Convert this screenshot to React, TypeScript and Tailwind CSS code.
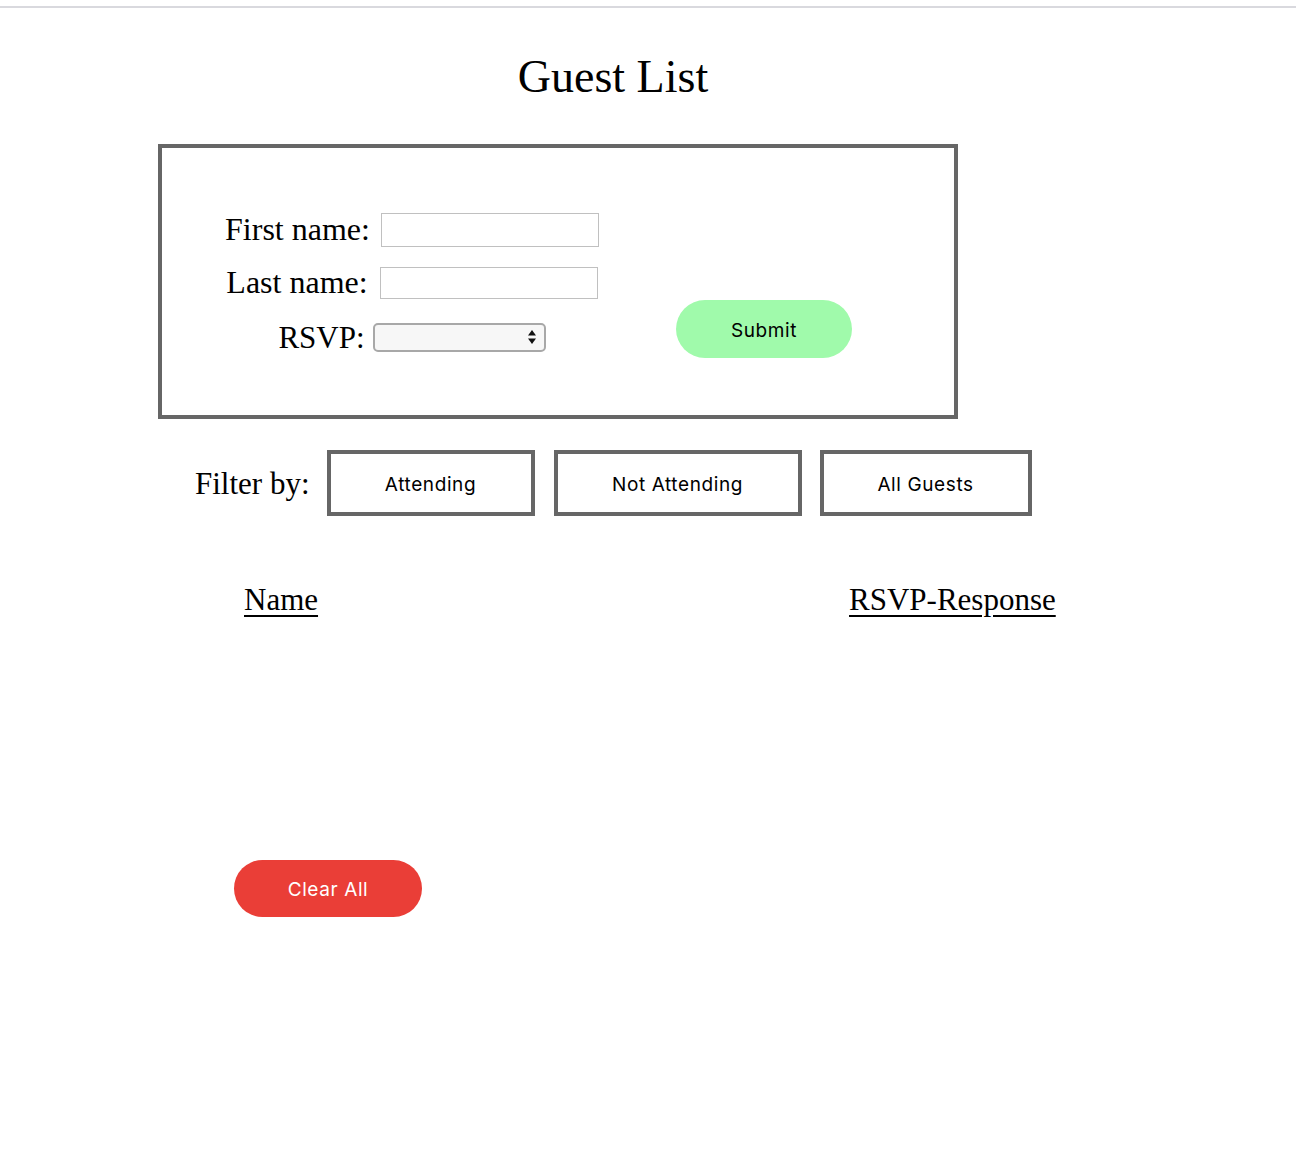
import React from "react";

const serif = "font-['Liberation_Serif',_'Times_New_Roman',_serif]";
const sans = "font-['Inter',_'Roboto',_sans-serif]";

function SelectArrows() {
  return (
    <svg width="10" height="16" viewBox="0 0 10 16" className="absolute right-[9px] top-[6px]">
      <path d="M5 1 L9 6.5 L1 6.5 Z" fill="#111" />
      <path d="M5 15 L9 9.5 L1 9.5 Z" fill="#111" />
    </svg>
  );
}

export default function App() {
  return (
    <div className="w-[1296px] min-h-[1174px] bg-white text-black">
      <div className="h-[6px] bg-white" />
      <div className="h-[2px] bg-[#d9d9de]" />

      <h1 className={`${serif} mt-[42px] w-[1226px] text-center text-[46px] leading-[54px] font-normal`}>
        Guest List
      </h1>

      <div className="mt-[40px] ml-[158px] w-[800px] h-[275px] border-4 border-[#666666] flex items-start">
        <div className={`${serif} w-[500px] pt-[65px] flex flex-col items-center`}>
          <div className="flex items-center h-[34px]">
            <span className="text-[32px] leading-[34px] -mt-[3px]">First name:</span>
            <input className="ml-[11px] w-[218px] h-[34px] border border-[#c0c0c0] bg-white outline-none" />
          </div>
          <div className="mt-[20px] flex items-center h-[32px]">
            <span className="text-[32px] leading-[32px] -mt-[2px]">Last name:</span>
            <input className="ml-[12px] w-[218px] h-[32px] border border-[#c0c0c0] bg-white outline-none" />
          </div>
          <div className="mt-[24px] flex items-center h-[29px]">
            <span className="text-[31px] leading-[29px] -mt-[1px]">RSVP:</span>
            <div className="relative ml-[8px] w-[173px] h-[29px]">
              <select className="appearance-none w-full h-full rounded-[5px] border-2 border-[#a8a8a8] bg-[#f7f7f7] outline-none">
                <option></option>
                <option>Attending</option>
                <option>Not Attending</option>
              </select>
              <SelectArrows />
            </div>
          </div>
        </div>
        <button
          className={`${sans} mt-[152px] ml-[14px] w-[176px] h-[58px] pt-[5px] rounded-full bg-[#a0faab] text-[19px] text-black tracking-[0.6px]`}
        >
          Submit
        </button>
      </div>

      <div className="mt-[31px] ml-[195px] flex items-center h-[66px]">
        <span className={`${serif} text-[31px] leading-[36px] mt-[2px]`}>Filter by:</span>
        <button className={`${sans} ml-[17px] w-[208px] h-[66px] pt-[5px] border-4 border-[#666666] bg-white text-[19px] tracking-[0.6px]`}>
          Attending
        </button>
        <button className={`${sans} ml-[19px] w-[248px] h-[66px] pt-[5px] border-4 border-[#666666] bg-white text-[19px] tracking-[0.6px]`}>
          Not Attending
        </button>
        <button className={`${sans} ml-[18px] w-[212px] h-[66px] pt-[5px] border-4 border-[#666666] bg-white text-[19px] tracking-[0.6px]`}>
          All Guests
        </button>
      </div>

      <div className={`${serif} mt-[66px] flex text-[31px] leading-[36px]`}>
        <span className="ml-[244px] underline underline-offset-[5px] decoration-[2px]">Name</span>
        <span className="ml-[531px] underline underline-offset-[5px] decoration-[2px]">RSVP-Response</span>
      </div>

      <button
        className={`${sans} mt-[242px] ml-[234px] w-[188px] h-[57px] pt-[3px] rounded-full bg-[#ea3e37] text-white text-[19px] tracking-[0.6px]`}
      >
        Clear All
      </button>
    </div>
  );
}
